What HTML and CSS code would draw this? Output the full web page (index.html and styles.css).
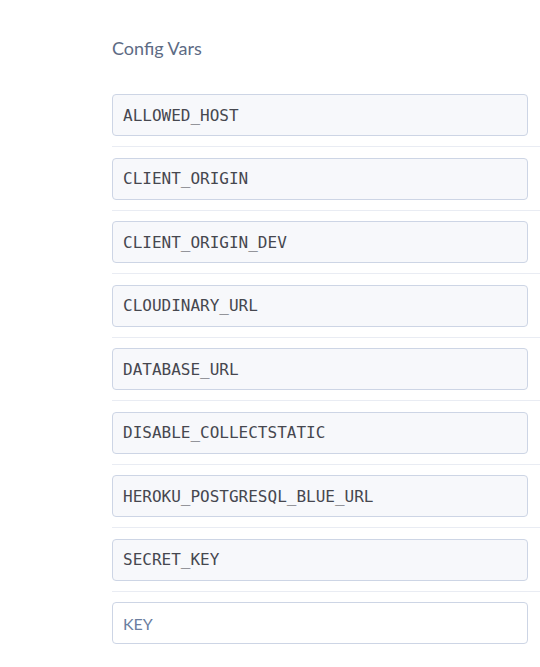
FILE: index.html
```html
<!DOCTYPE html>
<html>
<head>
<meta charset="utf-8">
<link rel="stylesheet" href="styles.css">
</head>
<body>
<div class="page">
  <h2 class="title">Config Vars</h2>
  <ul class="vars">
    <li class="row"><div class="field">ALLOWED_HOST</div></li>
    <li class="row"><div class="field">CLIENT_ORIGIN</div></li>
    <li class="row"><div class="field">CLIENT_ORIGIN_DEV</div></li>
    <li class="row"><div class="field">CLOUDINARY_URL</div></li>
    <li class="row"><div class="field">DATABASE_URL</div></li>
    <li class="row"><div class="field">DISABLE_COLLECTSTATIC</div></li>
    <li class="row"><div class="field">HEROKU_POSTGRESQL_BLUE_URL</div></li>
    <li class="row"><div class="field">SECRET_KEY</div></li>
    <li class="row row-new"><input class="field field-new" type="text" placeholder="KEY"></li>
  </ul>
</div>
</body>
</html>
```
FILE: styles.css
```css
html, body {
  margin: 0;
  padding: 0;
  background: #ffffff;
}
.page {
  padding: 36px 0 0 112px;
  font-family: Lato, "Open Sans", sans-serif;
}
.title {
  margin: 0;
  font-size: 18px;
  font-weight: 400;
  line-height: 24px;
  color: #5d6b84;
}
.vars {
  list-style: none;
  margin: 23.75px 0 0 0;
  padding: 0;
}
.row {
  padding: 10.25px 0;
  border-bottom: 1px solid #e9ecf3;
}
.row-new {
  border-bottom: none;
}
.field {
  box-sizing: border-box;
  display: flex;
  align-items: center;
  width: 416px;
  height: 42px;
  padding: 0 10px;
  border: 1px solid #cdd5e5;
  border-radius: 4px;
  background: #f7f8fb;
  font-family: "DejaVu Sans Mono", monospace;
  font-size: 16px;
  color: #46474f;
}
.field-new {
  background: #ffffff;
  font-family: Lato, "Open Sans", sans-serif;
  outline: none;
}
.field-new::placeholder {
  color: #6b7ea0;
  opacity: 1;
}
```
